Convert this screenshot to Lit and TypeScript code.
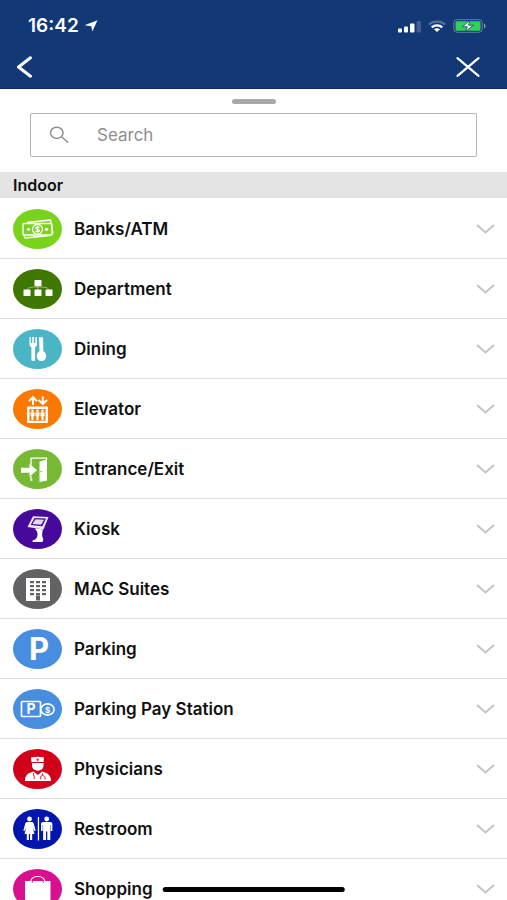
import { LitElement, html, svg, css, type SVGTemplateResult } from "lit";
import { customElement, property, state } from "lit/decorators.js";

interface Category {
  name: string;
  color: string;
  glyph: SVGTemplateResult;
}

const windows = [12, 16, 20, 24].flatMap((y) => [17, 23, 29].map((x) => ({ x, y })));

const categories: Category[] = [
  {
    name: "Banks/ATM",
    color: "#79d21c",
    glyph: svg`
      <g fill="none" stroke="#fff" stroke-width="1.3" stroke-linejoin="round">
        <path d="M14 13.5 37.5 11 40 24.5M10.5 25 12 29 37 26.5"/>
        <rect x="10" y="14.5" width="29" height="11.5" rx="0.5"/>
        <ellipse cx="24.5" cy="20.3" rx="5" ry="4.8"/>
        <path d="M26.4 18.6c-.8-.8-3.6-.8-3.6.5 0 1.6 3.6.9 3.6 2.5 0 1.3-2.9 1.4-3.8.4M24.6 17v6.6"/>
      </g>
      <circle cx="15.5" cy="20.3" r="1.6" fill="#fff"/>
      <circle cx="33.5" cy="20.3" r="1.6" fill="#fff"/>`,
  },
  {
    name: "Department",
    color: "#3e7802",
    glyph: svg`
      <path d="M24.8 17v4M14 21c1-3 5-3 10.800-3s10 0 11 3" fill="none" stroke="#fff" stroke-opacity=".6" stroke-width=".8"/>
      <g fill="#fff">
        <rect x="21.5" y="11" width="7" height="6.3" rx=".6"/>
        <rect x="10.5" y="20.5" width="7" height="6.5" rx=".6"/>
        <rect x="21.5" y="20.5" width="7" height="6.5" rx=".6"/>
        <rect x="32.5" y="20.5" width="7" height="6.5" rx=".6"/>
      </g>`,
  },
  {
    name: "Dining",
    color: "#4ab5c5",
    glyph: svg`
      <path fill="#fff" d="M16.5 8h1.3v6h1.4V8h1.700v6h1.400V8h1.700v7.500c0 1.500-.9 2.300-1.900 2.700V30.500c0 2-3.700 2-3.700 0V18.200c-1.100-.4-1.900-1.200-1.900-2.700z"/>
      <path fill="#fff" d="M26 8.300h4l.4 14c1.800.8 2.800 2.700 2.800 4.700 0 3-2 5-4.700 5s-4.700-2-4.700-5c0-2 1-3.900 2.700-4.700z"/>`,
  },
  {
    name: "Elevator",
    color: "#fb7900",
    glyph: svg`
      <path d="M20 16V9M16 12.200l4-4 4 4M29.800 7.500V14M25.500 11l4.300 4 4.300-4" fill="none" stroke="#fff" stroke-width="2"/>
      <rect x="14" y="17.5" width="21" height="16.5" rx="1.2" fill="#fff"/>
      <rect x="16.5" y="20" width="16" height="11.8" fill="#fb7900"/>
      <g fill="#fff">
        <circle cx="19.5" cy="21.8" r="1.2"/><circle cx="24.5" cy="21.8" r="1.2"/><circle cx="29.5" cy="21.8" r="1.2"/>
        <path d="M17.500 23.300h4v4h-.9v4h-2.200v-4h-.9zM22.500 23.300h4v4h-.9v4h-2.200v-4h-.9zM27.500 23.300h4v4h-.9v4h-2.200v-4h-.9z"/>
      </g>`,
  },
  {
    name: "Entrance/Exit",
    color: "#77b935",
    glyph: svg`
      <path d="M18 16V9.200H33.500V12M18 27v4h1.500" fill="none" stroke="#fff" stroke-width="1.3"/>
      <path fill="#fff" d="M26.500 12.500 34 10.500V31.500L26.500 33z"/>
      <path fill="#fff" d="M8 18.700h8.500v-4l7.500 6.500-7.500 6.500v-4H8z"/>
      <circle cx="28.2" cy="22.5" r=".8" fill="#77b935"/>`,
  },
  {
    name: "Kiosk",
    color: "#46099b",
    glyph: svg`
      <path fill="#fff" fill-opacity=".9" d="M20 7.300 35.500 8 30.500 20.500 14.500 18z"/>
      <path fill="#46099b" d="M21.500 9 33 9.600 29.300 17.200 17.700 16z"/>
      <path fill="#fff" fill-opacity=".85" d="M22.500 10.300 31 10.800 28.200 15.800 19.500 15z"/>
      <path fill="#fff" d="M22.500 19.300 30 20.500C28.800 24 28.800 27 30.300 30.500L29.500 33H19.500V31.500C22.500 30.800 24.500 29 24.500 26 24.500 23.500 23.800 21.500 22.500 20.800z"/>`,
  },
  {
    name: "MAC Suites",
    color: "#626265",
    glyph: svg`
      <path fill="#fff" d="M13 9H37V32H13z"/>
      ${windows.map((w) => svg`<rect x=${w.x} y=${w.y} width="4" height="2.2" fill="#626265"/>`)}
      <rect x="23" y="26.5" width="4" height="5" fill="#626265"/>`,
  },
  {
    name: "Parking",
    color: "#478ee0",
    glyph: svg`<text class="letter" x="26" y="31" font-size="31">P</text>`,
  },
  {
    name: "Parking Pay Station",
    color: "#478ee0",
    glyph: svg`
      <rect x="8.5" y="12.5" width="19" height="15" rx="1" fill="none" stroke="#fff" stroke-width="1.7"/>
      <text class="letter" x="18" y="25" font-size="14">P</text>
      <ellipse cx="34.5" cy="20.5" rx="6.600" ry="5.600" fill="none" stroke="#fff" stroke-width="1.6"/>
      <text class="letter" x="34.5" y="23.500" font-size="8">$</text>`,
  },
  {
    name: "Physicians",
    color: "#d0021b",
    glyph: svg`
      <g fill="#fff">
        <path d="M18 8.500c4-1 9-1 13 0L30.500 13h-12z"/>
        <path d="M19 14h11.500v2.500c0 3-2.500 5.200-5.700 5.200S19 19.500 19 16.500z"/>
        <path d="M12 32c0-5 2-8 8.500-9.500l4.300 3.500 4.300-3.500C35.500 24 38 27 38 32z"/>
      </g>
      <path d="M24.700 9.500v2.600M23.400 10.800h2.600M20.500 24c-1 2 2 4 .5 6M29.500 24.500v2M28 30.500c-1-2 0-4 1.500-4s3.500 2 2.500 4" fill="none" stroke="#d0021b" stroke-width=".9"/>`,
  },
  {
    name: "Restroom",
    color: "#0216ae",
    glyph: svg`
      <g fill="#fff">
        <circle cx="16.5" cy="10" r="2.4"/>
        <path d="M14.300 13h4.400c1.200 0 1.600.7 2 1.600l2 6.900-1.500.6-1.700-4.200 2 7.100h-2.300V31h-2.100v-6h-1.200v6h-2.100v-6h-2.300l2-7.100-1.700 4.200-1.500-.6 2-6.900c.4-.9.900-1.600 2-1.600z"/>
        <rect x="24.8" y="8" width="1.3" height="23.5"/>
        <circle cx="33.7" cy="10" r="2.4"/>
        <path d="M30.300 13h6.800c1.400 0 2.300.8 2.300 2.200V22h-1.700v-6h-.4v15h-3v-8.500h-1.200V31h-3V16h-.4v6h-1.700v-6.800c0-1.400.9-2.200 2.300-2.200z"/>
      </g>`,
  },
  {
    name: "Shopping",
    color: "#d80f8e",
    glyph: svg`
      <path fill="#fff" d="M12 12H37.500V37H12z"/>
      <path d="M17.500 14c0-4 2.500-6.500 7.200-6.500S32 10 32 14" fill="none" stroke="#fff" stroke-width="1.2"/>
      <path d="M19 14c1-6 10.500-6 11.500 0" fill="none" stroke="#d80f8e" stroke-width=".8"/>`,
  },
];

@customElement("category-row")
export class CategoryRow extends LitElement {
  @property({ attribute: false }) category!: Category;
  @state() private open = false;

  static styles = css`
    :host {
      display: block;
    }
    .row {
      display: flex;
      align-items: center;
      gap: 12px;
      width: 100%;
      height: 60px;
      padding: 0 12px 0 13px;
      border: 0;
      border-bottom: 1px solid #dcdcdc;
      background: #fff;
      color: #101010;
      font: 600 17px/20px Inter, "Liberation Sans", sans-serif;
      text-align: left;
      box-sizing: border-box;
      cursor: pointer;
    }
    .badge {
      flex: none;
      width: 49px;
      height: 40px;
    }
    .letter {
      fill: #fff;
      font-family: Inter, "Liberation Sans", sans-serif;
      font-weight: 700;
      text-anchor: middle;
    }
    .name {
      flex: 1;
    }
    .chevron {
      flex: none;
      width: 19px;
      height: 10px;
      fill: none;
      stroke: #c4c4c6;
      stroke-width: 2;
    }
    .open {
      transform: rotate(180deg);
    }
  `;

  render() {
    const { name, color, glyph } = this.category;
    return html`
      <button class="row" aria-expanded=${this.open} @click=${() => (this.open = !this.open)}>
        <svg class="badge" viewBox="0 0 49 40" aria-hidden="true">
          <ellipse cx="24.5" cy="20" rx="24.5" ry="20" fill=${color} />
          ${glyph}
        </svg>
        <span class="name">${name}</span>
        <svg class="chevron ${this.open ? "open" : ""}" viewBox="0 0 19 10" aria-hidden="true">
          <path d="M1 1 9.500 8.500 18 1" />
        </svg>
      </button>
    `;
  }
}

@customElement("app-root")
export class AppRoot extends LitElement {
  static styles = css`
    :host {
      display: flex;
      flex-direction: column;
      height: 100vh;
      overflow: hidden;
      background: #fff;
      color: #101010;
      font-family: Inter, "Liberation Sans", sans-serif;
    }
    .top {
      flex: none;
      background: #133876;
      color: #fff;
      border-bottom: 1px solid #0d2c62;
    }
    .status {
      display: flex;
      align-items: center;
      justify-content: space-between;
      height: 45px;
      padding: 7px 21px 0 28px;
      box-sizing: border-box;
    }
    .clock,
    .signals {
      display: flex;
      align-items: center;
    }
    .clock {
      gap: 5px;
      font-size: 19px;
      font-weight: 600;
      line-height: 20px;
    }
    .signals {
      gap: 7px;
    }
    .nav {
      display: flex;
      align-items: center;
      justify-content: space-between;
      height: 43px;
      padding: 0 21px 0 12px;
    }
    .tool {
      display: flex;
      align-items: center;
      justify-content: center;
      padding: 4px;
      border: 0;
      background: none;
      cursor: pointer;
    }
    .tool svg,
    .status svg {
      display: block;
    }
    .finder {
      flex: none;
      display: flex;
      flex-direction: column;
      gap: 9px;
      padding: 10px 30px 15px;
    }
    .grip {
      align-self: center;
      width: 44px;
      height: 5px;
      border-radius: 3px;
      background: #a8a8a8;
    }
    .search {
      display: flex;
      align-items: center;
      gap: 28px;
      height: 44px;
      padding: 0 18px;
      border: 1px solid #b4b4b4;
      border-radius: 2px;
      box-sizing: border-box;
    }
    .search svg {
      flex: none;
    }
    .query {
      flex: 1;
      min-width: 0;
      padding: 0;
      border: 0;
      outline: 0;
      background: none;
      color: #101010;
      font: 400 17px/20px Inter, "Liberation Sans", sans-serif;
    }
    .query::placeholder {
      color: #8e8e8e;
      opacity: 1;
    }
    .section {
      flex: none;
      margin: 0;
      padding: 3px 13px;
      background: #e4e4e4;
      font-size: 16px;
      font-weight: 600;
      line-height: 20px;
    }
    .list {
      flex: 1;
      min-height: 0;
      margin: 0;
      padding: 1px 0 0;
      overflow-y: auto;
      scrollbar-width: none;
      list-style: none;
    }
    .home {
      position: absolute;
      left: 50%;
      bottom: 8px;
      width: 36%;
      height: 5px;
      border-radius: 3px;
      background: #000;
      transform: translateX(-50%);
    }
  `;

  render() {
    return html`
      <header class="top">
        <div class="status">
          <div class="clock">
            <span>16:42</span>
            <svg width="14" height="12" viewBox="0 0 14 12" fill="#fff" aria-hidden="true">
              <path d="M13.500.3 8.300 11.500 7.300 6.300 0.500 5.300z" />
            </svg>
          </div>
          <div class="signals">
            <svg width="23" height="13" viewBox="0 0 23 13" fill="#fff" aria-hidden="true">
              <rect y="8.5" width="4" height="4" rx="1" />
              <rect x="6" y="6.5" width="4" height="6" rx="1" />
              <rect x="12" y="3.5" width="4.500" height="9" rx="1" />
              <rect x="18.5" y="1" width="4.500" height="11.500" rx="1" fill-opacity=".2" />
            </svg>
            <svg width="18" height="13" viewBox="0 0 18 13" fill="none" stroke="#fff" aria-hidden="true">
              <path d="M1 4.500C5.500.5 12.500.5 17 4.500" stroke-width="2" stroke-opacity=".3" />
              <path d="M3.700 7.300c3-2.600 7.600-2.600 10.600 0" stroke-width="2.200" />
              <path d="M6 9.300c1.800-1.400 4.200-1.400 6 0L9 12z" fill="#fff" stroke="none" />
            </svg>
            <svg width="33" height="14" viewBox="0 0 33 14" aria-hidden="true">
              <rect x=".7" y=".7" width="28.600" height="12.600" rx="3.500" fill="none" stroke="#fff" stroke-opacity=".35" />
              <path d="M31 4.500c2 .8 2 4.200 0 5z" fill="#fff" fill-opacity=".5" />
              <rect x="2.500" y="2.300" width="25" height="9.400" rx="1.500" fill="#30d158" />
              <path d="M16.500 1.500 9.500 7.800h4.800L12.500 12.500 20.500 6.200h-4.900z" fill="#fff" stroke="#133876" stroke-width=".8" />
            </svg>
          </div>
        </div>
        <nav class="nav">
          <button class="tool" aria-label="Back">
            <svg width="18" height="22" viewBox="0 0 18 22" fill="none" stroke="#fff" stroke-width="3" stroke-linecap="round" stroke-linejoin="round">
              <path d="M14.500 1.800 2.500 11l12 9.200" />
            </svg>
          </button>
          <button class="tool" aria-label="Close">
            <svg width="28" height="20" viewBox="0 0 28 20" fill="none" stroke="#fff" stroke-width="2.200" stroke-linecap="round">
              <path d="M3.500 1.200 24.500 18.800M24.500 1.200 3.500 18.800" />
            </svg>
          </button>
        </nav>
      </header>
      <div class="finder">
        <div class="grip"></div>
        <label class="search">
          <svg width="20" height="18" viewBox="0 0 20 18" fill="none" stroke="#8e8e8e" stroke-width="1.500" aria-hidden="true">
            <ellipse cx="7.800" cy="6.800" rx="6.300" ry="5.600" />
            <path d="M12.500 10.800 19 16.500" />
          </svg>
          <input class="query" type="search" placeholder="Search" aria-label="Search" />
        </label>
      </div>
      <h2 class="section">Indoor</h2>
      <ul class="list">
        ${categories.map((c) => html`<li><category-row .category=${c}></category-row></li>`)}
      </ul>
      <div class="home"></div>
    `;
  }
}
